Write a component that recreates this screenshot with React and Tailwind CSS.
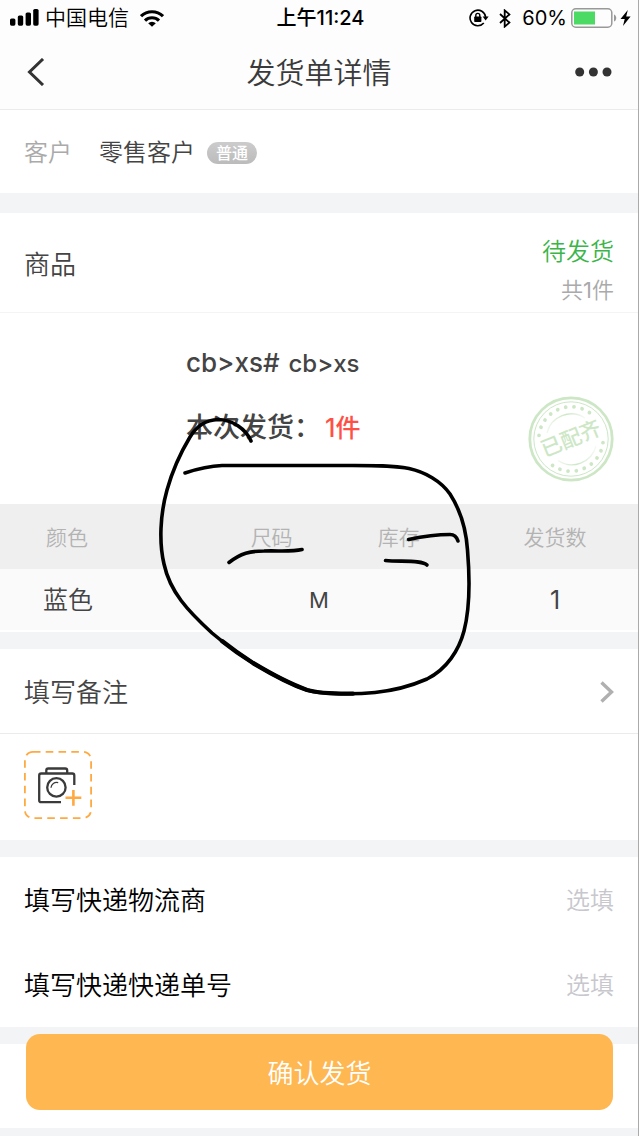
import { useState } from 'react'

const CAMPOS = [
  { id: 'carrier', label: '填写快递物流商' },
  { id: 'tracking', label: '填写快递快递单号' },
]

const ITEMS = [{ color: '蓝色', size: 'M', count: 1 }]

const DOT_ANGLES = [0, 1, 2, 3, 4, 5, 6, 7, 8].map(i => 6.5 + i * 14.8)

// the light CJK cut has no medium weight, bold-ish text uses the full family
const STRONG = "font-[Inter,'Noto_Sans_CJK_SC',sans-serif] font-medium"

function StatusBar() {
  return (
    <div className="grid grid-cols-[1fr_auto_1fr] items-center h-9 pl-[10px] pr-[7px] text-[20px] text-black">
      <div className="flex items-center">
        <svg width="29" height="18" viewBox="0 0 29 18">
          <rect x="0" y="9.5" width="5.4" height="7.2" rx="1.6" />
          <rect x="7.8" y="6.5" width="5.4" height="10.2" rx="1.6" />
          <rect x="15.6" y="3.5" width="5.4" height="13.2" rx="1.6" />
          <rect x="23.2" y="0" width="5.4" height="16.7" rx="1.6" />
        </svg>
        <span className="ml-[6px] text-[21px]">中国电信</span>
        <svg className="ml-[11px]" width="24" height="17" viewBox="0 0 24 17" fill="none" stroke="#000" strokeWidth="3.2">
          <path d="M1 6.2a15.8 15.8 0 0 1 22 0" />
          <path d="M5 10.6a10 10 0 0 1 14 0" />
          <path d="M12 16.8l-3.8-3.6a5.5 5.5 0 0 1 7.6 0z" fill="#000" stroke="none" />
        </svg>
      </div>
      <span className={STRONG}>上午11:24</span>
      <div className="flex items-center justify-end">
        <svg width="20" height="18" viewBox="0 0 20 18" fill="none" stroke="#000">
          <path d="M14.8 14A7.8 7.8 0 1 1 16.6 8" strokeWidth="1.6" />
          <path d="M13.6 7.6h6l-3 3.8z" fill="#000" stroke="none" />
          <rect x="5.2" y="7.4" width="7.2" height="5.6" rx="0.8" fill="#000" stroke="none" />
          <path d="M6.8 8V6.4a2 2 0 0 1 4 0V8" strokeWidth="1.4" />
        </svg>
        <svg className="ml-[10px]" width="12" height="19" viewBox="0 0 12 19" fill="none" stroke="#000" strokeWidth="1.8">
          <path d="M1 5l9.4 8.6-4.7 4V1.4l4.7 4L1 14" />
        </svg>
        <span className="ml-[11px]">60%</span>
        <svg className="ml-1" width="46" height="20" viewBox="0 0 46 20">
          <rect x="0.8" y="0.8" width="40" height="18.4" rx="4" fill="none" stroke="#999" strokeWidth="1.5" />
          <rect x="3" y="3.5" width="21" height="13" fill="#4cd964" />
          <path d="M43 6.5c3 1 3 6 0 7z" fill="#999" />
        </svg>
        <svg className="ml-[3px]" width="11" height="16" viewBox="0 0 11 16">
          <path d="M7.8 0L0.5 9h4.2L3 16l7.6-9.4H6.2z" />
        </svg>
      </div>
    </div>
  )
}

function Stamp() {
  return (
    <svg className="shrink-0" width="86" height="86" viewBox="-43 -43 86 86" fill="none" stroke="#cde7c6">
      <defs>
        <linearGradient id="fade">
          <stop offset="0" stopColor="#cde7c6" stopOpacity="0.3" />
          <stop offset="0.5" stopColor="#cde7c6" />
          <stop offset="1" stopColor="#cde7c6" stopOpacity="0.2" />
        </linearGradient>
      </defs>
      <circle r="41.2" strokeWidth="2.8" />
      <circle r="37.2" strokeWidth="1" />
      {DOT_ANGLES.map(a => (
        <g key={a} fill="#cde7c6" stroke="none">
          <circle cx="32.2" r="1.9" transform={`rotate(${a})`} />
          <circle cx="-32.2" r="1.9" transform={`rotate(${a})`} />
        </g>
      ))}
      <path d="M-24 -6A25 25 0 0 1 14 -21" stroke="url(#fade)" strokeWidth="1.3" />
      <path d="M25 7A25 25 0 0 1 -13 21.5" stroke="url(#fade)" strokeWidth="1.3" />
      <text
        className={`text-[21px] ${STRONG}`}
        transform="rotate(-22)"
        y="7"
        textAnchor="middle"
        fill="#cde7c6"
        stroke="none"
      >
        已配齐
      </text>
    </svg>
  )
}

function CameraIcon() {
  return (
    <svg width="68" height="68" viewBox="0 0 68 68" fill="none">
      <rect x="0.9" y="0.9" width="66.2" height="66.2" rx="8" stroke="#ffa940" strokeWidth="1.8" strokeDasharray="7.6 5.2" />
      <g stroke="#3a3a3a" strokeWidth="2.3">
        <path d="M50.3 34V24.5a2 2 0 0 0-2-2H17.2a2 2 0 0 0-2 2v24.7a2 2 0 0 0 2 2H37" />
        <path d="M22.3 22V19.5a2 2 0 0 1 2-2h16.9a2 2 0 0 1 2 2v2.5" />
        <circle cx="32.4" cy="36.4" r="9.2" />
        <path d="M27 36.8a5.6 5.6 0 0 1 7.2-5.2" strokeWidth="1.3" />
      </g>
      <path d="M41.5 46.8h15.8M49.4 38.9v15.8" stroke="#ffa940" strokeWidth="2.6" />
    </svg>
  )
}

function Scribble() {
  return (
    <svg
      className="absolute left-0 top-0 pointer-events-none"
      width="639"
      height="1136"
      viewBox="0 0 639 1136"
      fill="none"
      stroke="#000"
      strokeWidth="3.6"
      strokeLinecap="round"
      strokeLinejoin="round"
    >
      <path d="M251 441C246 429 232 419.5 218 419.5C204 420 196 427 190 437C181 452 172 472 167 490C160 515 159 543 164 564C170 592 188 611 212 633C225 644 239 654 253 663C268 672 290 684 307 690C321 694.5 355 694.5 375 692.5C394 690.5 411 686 427 679C447 669 459 650 464 631C470 608 470 580 467.5 550C466 528 461 511 450 494C441 481 425 472 409 468.5C391 465 370 465.5 340 465.5H222C208 466 197 469 185 473" />
      <path d="M222 641C232 649 242 656 253 663C268 672 290 684 307 690C321 694 338 693.7 353 693.6" strokeWidth="4.4" />
      <path d="M229 562.5C241 553 250 551 264 551C279 550.5 291 552 302 549.5" />
      <path d="M408.5 539.5C425 536 437 534.5 450 534.5Q456 534.5 458 541" />
      <path d="M385.5 560.5C400 562 422 559.5 427 565" />
    </svg>
  )
}

function App() {
  const [values, setValues] = useState({ carrier: '', tracking: '' })

  return (
    <div className="relative min-h-screen bg-[#f3f4f6] border-r border-[#aaaaaa] font-[Inter,'Noto_Sans_CJK_SC_DemiLight','Noto_Sans_CJK_SC_Light','Noto_Sans_CJK_SC',sans-serif] text-[#444444]">
      <header className="bg-[#fdfdfd] border-b border-[#ebebeb]">
        <StatusBar />
        <div className="grid grid-cols-[1fr_auto_1fr] items-center h-[73px] px-[26px] pb-[2px]">
          <button type="button" aria-label="返回" className="justify-self-start">
            <svg width="19" height="28" viewBox="0 0 19 28" fill="none" stroke="#333" strokeWidth="3">
              <path d="M17 1L3.5 14 17 27" />
            </svg>
          </button>
          <h1 className="pt-1 text-[29px] text-[#3a3a3a]">发货单详情</h1>
          <button type="button" aria-label="更多" className="justify-self-end">
            <svg width="37" height="10" viewBox="0 0 37 10" fill="#333">
              <circle cx="4.7" cy="5" r="4.5" />
              <circle cx="18.4" cy="5" r="4.5" />
              <circle cx="32" cy="5" r="4.5" />
            </svg>
          </button>
        </div>
      </header>

      <main>
        <section className="flex items-center h-[83px] px-6 pt-[2px] bg-white text-[24px]">
          <span className="text-[#aaaaaa]">客户</span>
          <span className="ml-[27px]">零售客户</span>
          <span className={`ml-3 px-[9px] rounded-full bg-gradient-to-b from-[#cccccc] to-[#bbbbbb] text-[16px] leading-[22px] text-white ${STRONG}`}>普通</span>
        </section>

        <section className="mt-5 bg-white">
          <div className="flex items-center justify-between h-[100px] px-6 pt-1 border-b border-[#f4f4f4]">
            <h2 className="text-[26px]">商品</h2>
            <div className="pt-3 text-right">
              <p className="text-[24px] leading-[38px] text-[#3bb54a]">待发货</p>
              <p className="text-[22px] leading-[38px] text-[#aaaaaa]">共1件</p>
            </div>
          </div>

          <div className="flex items-end justify-between h-[191px] pl-[186px] pr-6 pb-[22px]">
            <div className={`self-start pt-[30px] ${STRONG}`}>
              <p className="text-[26px] leading-[40px]">
                cb&gt;xs# <span className="ml-[2px] text-[24px]">cb&gt;xs</span>
              </p>
              <p className="mt-6 text-[27px] leading-[40px]">
                本次发货：<span className="ml-1 text-[25px] text-[#ff5045]">1件</span>
              </p>
            </div>
            <Stamp />
          </div>

          <table className="w-full table-fixed text-center">
            <thead className="bg-[#efefef] text-[21px] text-[#b3b3b3]">
              <tr className="h-[65px]">
                <th className="w-[26%] pt-[2px] pr-8 font-normal">颜色</th>
                <th className="w-[25%] pt-[2px] pl-[52px] font-normal">尺码</th>
                <th className="w-[23%] pt-[2px] font-normal">库存</th>
                <th className="w-[26%] pt-[2px] font-normal">发货数</th>
              </tr>
            </thead>
            <tbody className="bg-[#fafafa]">
              {ITEMS.map(item => (
                <tr key={item.color} className="h-[61px] text-[25px]">
                  <td className="pt-[2px] pr-[30px]">{item.color}</td>
                  <td colSpan={2} className="pt-[2px] text-[22px]">{item.size}</td>
                  <td className="pt-[2px]">{item.count}</td>
                </tr>
              ))}
            </tbody>
          </table>
          <div className="h-[2px]" />
        </section>

        <section className="mt-[17px] bg-white">
          <button type="button" className="flex items-center justify-between w-full h-[85px] px-6 pt-[2px] border-b border-[#ebebeb] text-[26px]">
            填写备注
            <svg width="14" height="22" viewBox="0 0 14 22" fill="none" stroke="#b0b0b0" strokeWidth="3.4">
              <path d="M1.5 1.5L11.5 11 1.5 20.5" />
            </svg>
          </button>
          <div className="flex items-center h-[106px] px-6 pb-1">
            <button type="button" aria-label="添加照片">
              <CameraIcon />
            </button>
          </div>
        </section>

        <section className="mt-[17px] bg-white">
          {CAMPOS.map(campo => (
            <div key={campo.id} className="flex items-center h-[85px] px-6 pt-[2px] text-black">
              <label htmlFor={campo.id} className="shrink-0 text-[26px]">{campo.label}</label>
              <input
                id={campo.id}
                value={values[campo.id]}
                onChange={e => setValues({ ...values, [campo.id]: e.target.value })}
                placeholder="选填"
                className="flex-1 min-w-0 text-right text-[24px] placeholder:text-[#c7c7cd] outline-none"
              />
            </div>
          ))}
        </section>

        <div className="mt-[17px] h-[84px] bg-white" />
        <div className="h-2" />
      </main>

      <div className="fixed inset-x-0 bottom-[26px] px-[26px]">
        <button type="button" className="w-full h-[76px] rounded-[14px] bg-[#ffb751] pt-[2px] text-[26px] text-white">
          确认发货
        </button>
      </div>

      <Scribble />
    </div>
  )
}

export default App
